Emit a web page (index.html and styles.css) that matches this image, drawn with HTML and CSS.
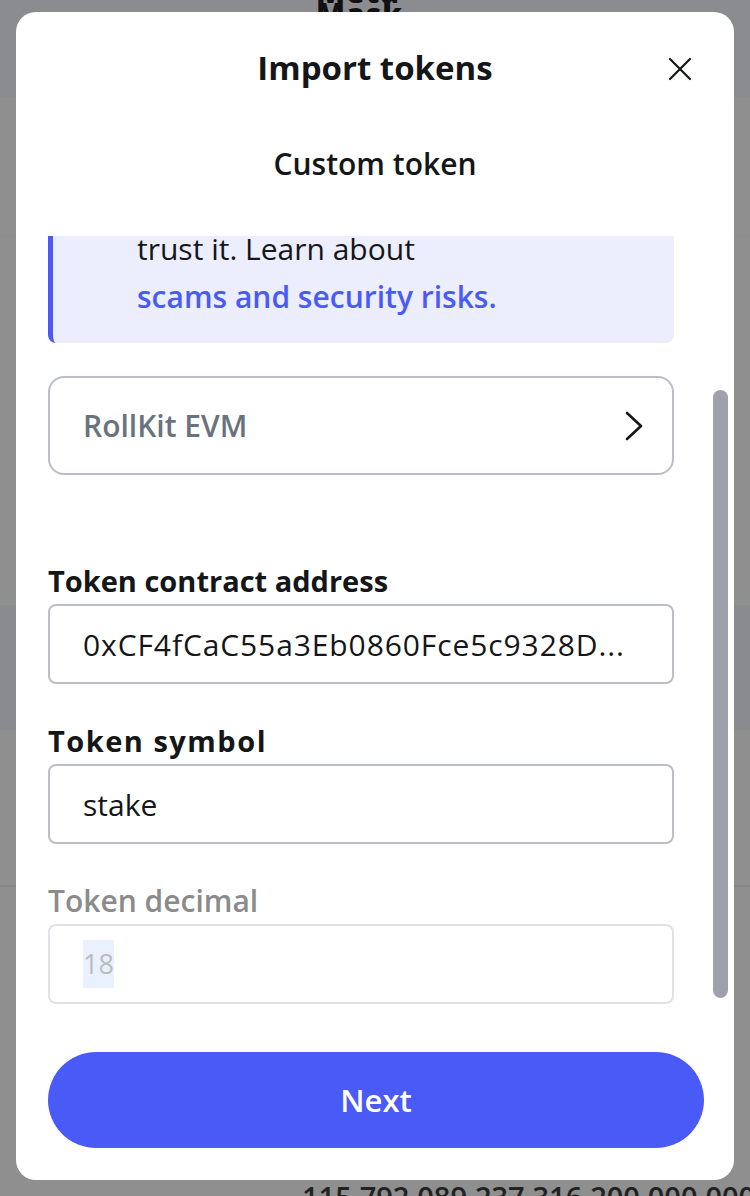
FILE: index.html
```html
<!DOCTYPE html>
<html>
<head>
<meta charset="utf-8">
<link rel="stylesheet" href="styles.css">
</head>
<body>
<div class="page">
  <div class="band band-top"><div class="logo">Meta<br>Mask</div></div>
  <div class="band band-a"></div>
  <div class="band band-b"></div>
  <div class="band band-c"></div>
  <div class="band band-d"></div>
  <div class="band band-e"><div class="balance">115,792,089,237,316,200,000,000,000</div></div>
</div>

<div class="modal">
  <div class="header">
    <h1 class="title">Import tokens</h1>
    <button class="close" aria-label="Close">
      <svg width="24" height="24" viewBox="0 0 24 24"><path d="M2 2 L22 22 M22 2 L2 22" stroke="#141618" stroke-width="2.2" stroke-linecap="round" fill="none"/></svg>
    </button>
  </div>
  <div class="tab">Custom token</div>

  <div class="scroll">
    <div class="scroll-inner">
      <div class="banner">
        <p class="line">trust it. Learn about</p>
        <a class="link">scams and security risks.</a>
      </div>

      <div class="select">
        <span class="select-text">RollKit EVM</span>
        <svg class="chev" width="20" height="30" viewBox="0 0 20 30"><path d="M3 2 L17 15 L3 28" stroke="#141618" stroke-width="2.6" stroke-linecap="round" stroke-linejoin="round" fill="none"/></svg>
      </div>

      <div class="field first">
        <div class="label">Token contract address</div>
        <div class="input address">0xCF4fCaC55a3Eb0860Fce5c9328D...</div>
      </div>
      <div class="field">
        <div class="label wide">Token symbol</div>
        <div class="input">stake</div>
      </div>
      <div class="field">
        <div class="label muted">Token decimal</div>
        <div class="input disabled"><span class="sel">18</span></div>
      </div>
    </div>
    <div class="thumb"></div>
  </div>

  <div class="footer">
    <button class="next">Next</button>
  </div>
</div>
</body>
</html>
```

FILE: styles.css
```css
* { box-sizing: border-box; }
html, body { margin: 0; padding: 0; }
body {
  width: 750px;
  height: 1196px;
  overflow: hidden;
  position: relative;
  font-family: "Open Sans", "Noto Sans", sans-serif;
  background: #8f8f8f;
}

.page { display: flex; flex-direction: column; height: 1196px; }
.band { flex: none; }
.band-top { height: 97px; background: #8b8c8f; position: relative; overflow: hidden; }
.logo {
  position: absolute; left: 316px; top: -19px;
  font-size: 30px; font-weight: 800; line-height: 22px; color: #111;
  letter-spacing: 1px;
}
.band-a { height: 138px; background: #8f8f8f; border-top: 1px solid #8d8d8d; }
.band-b { height: 370px; background: #8f8f8f; border-top: 1px solid #8c8c8c; }
.band-c { height: 125px; background: #8a8b8e; }
.band-d { height: 155px; background: #8f8f8f; }
.band-e { flex: 1; background: #8f8f8f; border-top: 2px solid #858585; position: relative; overflow: hidden; }
.balance {
  position: absolute; left: 302px; top: 290px;
  font-size: 29px; font-weight: 600; color: #222; white-space: nowrap;
}

.modal {
  position: absolute;
  left: 16px; top: 12px;
  width: 718px; height: 1168px;
  background: #fff;
  border-radius: 20px;
  display: flex; flex-direction: column;
  overflow: hidden;
}

.header {
  height: 114px;
  display: flex; align-items: center; justify-content: center;
  position: relative;
}
.title {
  margin: 0;
  font-size: 33px; font-weight: 700; color: #141618;
  line-height: 40px;
  margin-top: -2px;
}
.close {
  position: absolute; right: 42px; top: 45px;
  width: 24px; height: 24px; padding: 0; border: 0; background: none;
  display: flex;
}

.tab {
  height: 76px;
  display: flex; align-items: center; justify-content: center;
  font-size: 30px; font-weight: 600; color: #141618;
  line-height: 36px;
}

.scroll {
  height: 786px;
  position: relative;
  overflow: hidden;
  margin-top: 34px;
}
.scroll-inner {
  padding: 0 60px 0 32px;
}
.thumb {
  position: absolute;
  right: 6px; top: 154px;
  width: 15px; height: 608px;
  background: #9ea1ab;
  border-radius: 8px;
}

.banner {
  background: #eceefd;
  border-left: 5px solid #4a5af7;
  border-radius: 0 0 8px 8px;
  padding: 0 20px 28px 84px;
  font-size: 30px; color: #141618;
}
.line { margin: 0; line-height: 26px; }
.link { display: block; color: #4a5af7; font-weight: 600; line-height: 36px; margin-top: 17px; }

.select {
  margin-top: 33px;
  height: 99px;
  border: 2px solid #bbbec9;
  border-radius: 16px;
  display: flex; align-items: center; justify-content: space-between;
  padding: 0 28px 0 33px;
}
.select-text { font-size: 30px; font-weight: 600; color: #6a737d; }

.field { display: flex; flex-direction: column; margin-top: 39px; }
.field.first { margin-top: 88px; }
.label {
  font-size: 29px; font-weight: 700; color: #141618;
  line-height: 36px; margin-bottom: 5px;
}
.label.wide { letter-spacing: 1.5px; }
.label.muted { color: #8b8b8b; font-weight: 600; font-size: 30px; }
.input {
  height: 80px;
  border: 2px solid #bbbec9;
  border-radius: 8px;
  display: flex; align-items: center;
  padding: 0 33px;
  font-size: 30px; color: #141618;
}
.input.address { letter-spacing: 0.9px; }
.input.disabled { border-color: #e1e2e7; color: #bcbcbc; font-size: 27px; }
.sel { background: #eaf1fe; line-height: 48px; }

.footer { padding: 30px 30px 0 32px; }
.next {
  width: 656px; height: 96px;
  border: 0; border-radius: 48px;
  background: #4a5af7; color: #fff;
  font-family: inherit; font-size: 31px; font-weight: 600;
}
```
